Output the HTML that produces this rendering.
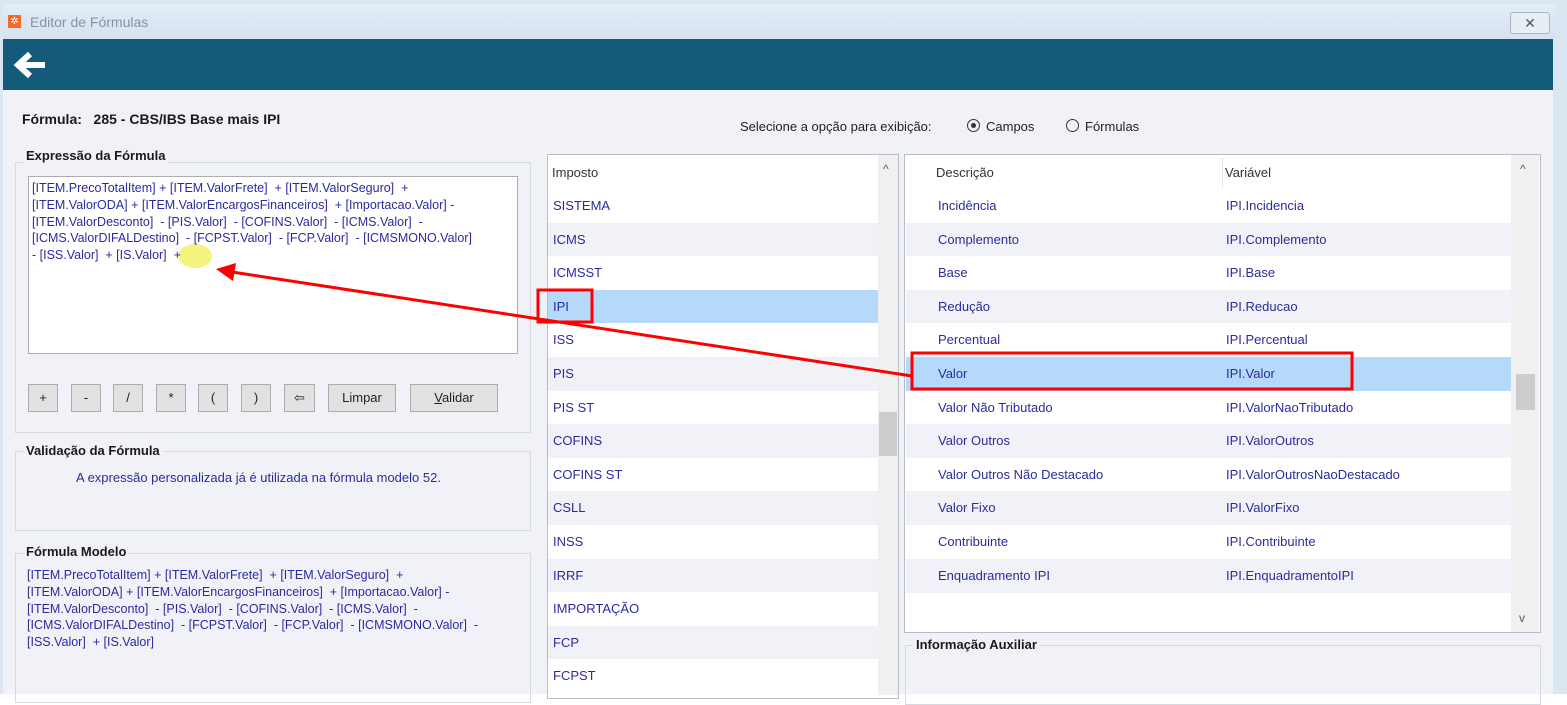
<!DOCTYPE html>
<html><head><meta charset="utf-8"><style>
*{margin:0;padding:0;box-sizing:border-box}
body{width:1567px;height:694px;overflow:hidden;background:#fff;font-family:"Liberation Sans",sans-serif;font-size:13px;position:relative}
.a{position:absolute}
.t{color:#2b2b9e;white-space:nowrap}
.b{font-weight:bold;color:#1a1a1a}
.grp{position:absolute;border:1px solid #d6d9e2;}
.lbl{position:absolute;background:#f1f2f8;font-weight:bold;color:#1a1a1a;padding:0 3px;font-size:13px}
.btn{position:absolute;top:384px;height:28px;background:#e1e1e1;border:1px solid #adadad;text-align:center;line-height:26px;color:#222;font-size:13px}
.row{position:absolute;height:34px;line-height:34px}
</style></head><body>
<!-- title bar -->
<div class="a" style="left:0;top:0;width:1567px;height:694px;background:#dbe6f3"></div>
<div class="a" style="left:3px;top:4px;width:1553px;height:35px;background:linear-gradient(#e4ecf6,#d5e2f1)"></div>
<div class="a" style="left:8px;top:15px;width:13px;height:13px;background:#f26b2b;color:#fff;font-size:10px;line-height:13px;text-align:center">✲</div>
<div class="a" style="left:30px;top:14px;color:#8a929c;font-size:14px">Editor de Fórmulas</div>
<div class="a" style="left:1510px;top:12px;width:40px;height:22px;border:1px solid #a9b4c2;border-radius:3px;background:#e8eef6;text-align:center;line-height:20px;color:#555;font-size:14px">✕</div>
<div class="a" style="left:3px;top:39px;width:1550px;height:51px;background:#145a7a"></div>
<svg class="a" style="left:12px;top:50px" width="36" height="30" viewBox="0 0 36 30"><path d="M33 15H8M18 4L6 15l12 11" stroke="#fff" stroke-width="6" fill="none" stroke-linejoin="miter"/></svg>
<div class="a" style="left:3px;top:90px;width:1550px;height:604px;background:#f1f2f8"></div>

<div class="a b" style="left:22px;top:111px;font-size:14px">Fórmula: &nbsp;&nbsp;285 - CBS/IBS Base mais IPI</div>

<div class="grp" style="left:15px;top:162px;width:516px;height:271px"></div>
<div class="lbl" style="left:23px;top:148px">Expressão da Fórmula</div>
<div class="a" style="left:28px;top:176px;width:490px;height:178px;background:#fff;border:1px solid #abadb3"></div>
<div class="a" style="left:178px;top:244px;width:34px;height:24px;border-radius:50%;background:#f5f26a;opacity:.85"></div>
<div class="a t" style="left:32px;top:180px;line-height:16.8px;font-size:12.5px">[ITEM.PrecoTotalItem] + [ITEM.ValorFrete] &nbsp;+ [ITEM.ValorSeguro] &nbsp;+<br>[ITEM.ValorODA] + [ITEM.ValorEncargosFinanceiros] &nbsp;+ [Importacao.Valor] -<br>[ITEM.ValorDesconto] &nbsp;- [PIS.Valor] &nbsp;- [COFINS.Valor] &nbsp;- [ICMS.Valor] &nbsp;-<br>[ICMS.ValorDIFALDestino] &nbsp;- [FCPST.Valor] &nbsp;- [FCP.Valor] &nbsp;- [ICMSMONO.Valor]<br>- [ISS.Valor] &nbsp;+ [IS.Valor] &nbsp;+</div>

<div class="btn" style="left:28px;width:30px">+</div>
<div class="btn" style="left:71px;width:30px">-</div>
<div class="btn" style="left:113px;width:30px">/</div>
<div class="btn" style="left:156px;width:30px">*</div>
<div class="btn" style="left:198px;width:30px">(</div>
<div class="btn" style="left:241px;width:30px">)</div>
<div class="btn" style="left:284px;width:31px">⇦</div>
<div class="btn" style="left:328px;width:68px">Limpar</div>
<div class="btn" style="left:410px;width:88px"><u>V</u>alidar</div>

<div class="grp" style="left:15px;top:451px;width:516px;height:80px"></div>
<div class="lbl" style="left:23px;top:443px">Validação da Fórmula</div>
<div class="a t" style="left:76px;top:470px">A expressão personalizada já é utilizada na fórmula modelo 52.</div>

<div class="grp" style="left:15px;top:553px;width:516px;height:150px"></div>
<div class="lbl" style="left:23px;top:544px">Fórmula Modelo</div>
<div class="a t" style="left:27px;top:567px;line-height:16.8px;font-size:12.5px">[ITEM.PrecoTotalItem] + [ITEM.ValorFrete] &nbsp;+ [ITEM.ValorSeguro] &nbsp;+<br>[ITEM.ValorODA] + [ITEM.ValorEncargosFinanceiros] &nbsp;+ [Importacao.Valor] -<br>[ITEM.ValorDesconto] &nbsp;- [PIS.Valor] &nbsp;- [COFINS.Valor] &nbsp;- [ICMS.Valor] &nbsp;-<br>[ICMS.ValorDIFALDestino] &nbsp;- [FCPST.Valor] &nbsp;- [FCP.Valor] &nbsp;- [ICMSMONO.Valor] &nbsp;-<br>[ISS.Valor] &nbsp;+ [IS.Valor]</div>

<div class="a" style="left:740px;top:119px;color:#222">Selecione a opção para exibição:</div>
<div class="a" style="left:967px;top:119px;width:13px;height:13px;border:1px solid #333;border-radius:50%"></div>
<div class="a" style="left:971px;top:123px;width:5px;height:5px;background:#333;border-radius:50%"></div>
<div class="a" style="left:986px;top:119px;color:#222">Campos</div>
<div class="a" style="left:1066px;top:119px;width:13px;height:13px;border:1px solid #333;border-radius:50%"></div>
<div class="a" style="left:1085px;top:119px;color:#222">Fórmulas</div>

<!-- left list -->
<div class="a" style="left:547px;top:154px;width:352px;height:545px;background:#fff;border:1px solid #b8bcc6"></div>
<div class="a" style="left:552px;top:165px;color:#333">Imposto</div>
<div class="a" style="left:878px;top:155px;width:20px;height:540px;background:#f0f0f0"></div>
<div class="a" style="left:883px;top:162px;color:#555;font-size:12px">^</div>
<div class="a" style="left:879px;top:412px;width:18px;height:44px;background:#cdcdcd"></div>
<div id="L"></div>
<!-- right list -->
<div class="a" style="left:904px;top:154px;width:637px;height:479px;background:#fff;border:1px solid #b8bcc6"></div>
<div class="a" style="left:936px;top:165px;color:#333">Descrição</div>
<div class="a" style="left:1225px;top:165px;color:#333">Variável</div>
<div class="a" style="left:1222px;top:158px;width:1px;height:30px;background:#e4e4e4"></div>
<div class="a" style="left:1511px;top:155px;width:28px;height:477px;background:#f0f0f0"></div>
<div class="a" style="left:1520px;top:162px;color:#555;font-size:12px">^</div>
<div class="a" style="left:1519px;top:611px;color:#555;font-size:12px">v</div>
<div class="a" style="left:1516px;top:374px;width:19px;height:36px;background:#cdcdcd"></div>
<div id="R"></div>

<div class="grp" style="left:905px;top:645px;width:636px;height:60px"></div>
<div class="lbl" style="left:913px;top:637px">Informação Auxiliar</div>

<script>
var L=["SISTEMA","ICMS","ICMSST","IPI","ISS","PIS","PIS ST","COFINS","COFINS ST","CSLL","INSS","IRRF","IMPORTAÇÃO","FCP","FCPST"];
var h="";
L.forEach(function(s,i){var y=189+i*33.6;var bg=i==3?"#b5d9fb":(i%2?"#f1f2f8":"#fff");
h+='<div class="row t" style="left:548px;top:'+y+'px;width:330px;background:'+bg+';padding-left:5px">'+s+'</div>';});
document.getElementById("L").outerHTML=h;
var R=[["Incidência","IPI.Incidencia"],["Complemento","IPI.Complemento"],["Base","IPI.Base"],["Redução","IPI.Reducao"],["Percentual","IPI.Percentual"],["Valor","IPI.Valor"],["Valor Não Tributado","IPI.ValorNaoTributado"],["Valor Outros","IPI.ValorOutros"],["Valor Outros Não Destacado","IPI.ValorOutrosNaoDestacado"],["Valor Fixo","IPI.ValorFixo"],["Contribuinte","IPI.Contribuinte"],["Enquadramento IPI","IPI.EnquadramentoIPI"]];
h="";
R.forEach(function(r,i){var y=189+i*33.6;var bg=i==5?"#b5d9fb":(i%2?"#f1f2f8":"#fff");
h+='<div class="row t" style="left:906px;top:'+y+'px;width:605px;background:'+bg+'"><span class="a" style="left:32px">'+r[0]+'</span><span class="a" style="left:320px">'+r[1]+'</span></div>';});
document.getElementById("R").outerHTML=h;
</script>
<!-- annotations -->
<svg class="a" style="left:0;top:0" width="1567" height="694">
<rect x="538" y="290" width="54" height="32" fill="none" stroke="#f00" stroke-width="3"/>
<rect x="912" y="353" width="440" height="36" fill="none" stroke="#f00" stroke-width="3"/>
<line x1="912" y1="376" x2="232" y2="272" stroke="#f00" stroke-width="3"/>
<polygon points="216,269 236,263 233,281" fill="#f00"/>
</svg>
</body></html>
